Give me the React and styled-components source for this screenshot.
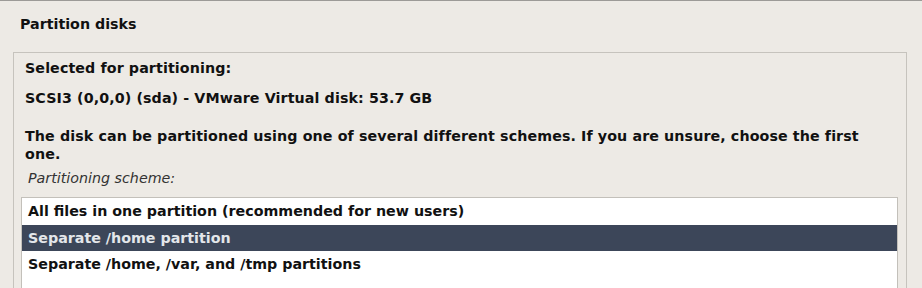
import React from "react";
import styled, { createGlobalStyle } from "styled-components";

const GlobalStyle = createGlobalStyle`
  html, body {
    margin: 0;
    padding: 0;
    background: #edeae5;
  }
`;

const schemes = [
  "All files in one partition (recommended for new users)",
  "Separate /home partition",
  "Separate /home, /var, and /tmp partitions",
];

const App = () => {
  const selected = 1;
  return (
    <>
      <GlobalStyle />
      <Page>
        <Title>Partition disks</Title>
        <Panel>
          <Heading>Selected for partitioning:</Heading>
          <Disk>SCSI3 (0,0,0) (sda) - VMware Virtual disk: 53.7 GB</Disk>
          <Text>
            The disk can be partitioned using one of several different schemes.
            If you are unsure, choose the first one.
          </Text>
          <Label>Partitioning scheme:</Label>
          <List>
            {schemes.map((s, i) => (
              <Row key={s} $active={i === selected}>
                {s}
              </Row>
            ))}
          </List>
        </Panel>
      </Page>
    </>
  );
};

const Page = styled.div`
  height: 288px;
  box-sizing: border-box;
  border-top: 1px solid #9c9a97;
  background: #edeae5;
  font-family: "DejaVu Sans", sans-serif;
  font-size: 14.25px;
  color: #111;
  overflow: hidden;
`;

const Title = styled.div`
  font-weight: 700;
  padding: 14px 20px 0;
  height: 37px;
  line-height: 18px;
`;

const Panel = styled.div`
  margin-left: 13px;
  width: 894px;
  box-sizing: border-box;
  height: 260px;
  border: 1px solid #c6c3bd;
  border-bottom: none;
  padding: 6px 8px 0 7px;
  display: flex;
  flex-direction: column;
`;

const Heading = styled.div`
  font-weight: 700;
  line-height: 18px;
  padding-left: 4px;
  letter-spacing: 0.1px;
`;

const Disk = styled(Heading)`
  margin-top: 12px;
`;

const Text = styled(Heading)`
  margin-top: 20px;
  padding-right: 14px;
`;

const Label = styled.div`
  font-style: italic;
  color: #333;
  line-height: 18px;
  margin-top: 6px;
  padding-left: 7px;
`;

const List = styled.div`
  margin-top: 10px;
  background: #fff;
  border: 1px solid #c3c0ba;
  border-bottom: none;
  flex: 1;
`;

const Row = styled.div`
  height: 26px;
  line-height: 26px;
  padding-left: 6px;
  font-weight: 700;
  color: ${(p) => (p.$active ? "#e3e6ea" : "#111")};
  background: ${(p) => (p.$active ? "#3c4659" : "transparent")};
  &:first-child {
    height: 27px;
    line-height: 27px;
  }
`;

export default App;
